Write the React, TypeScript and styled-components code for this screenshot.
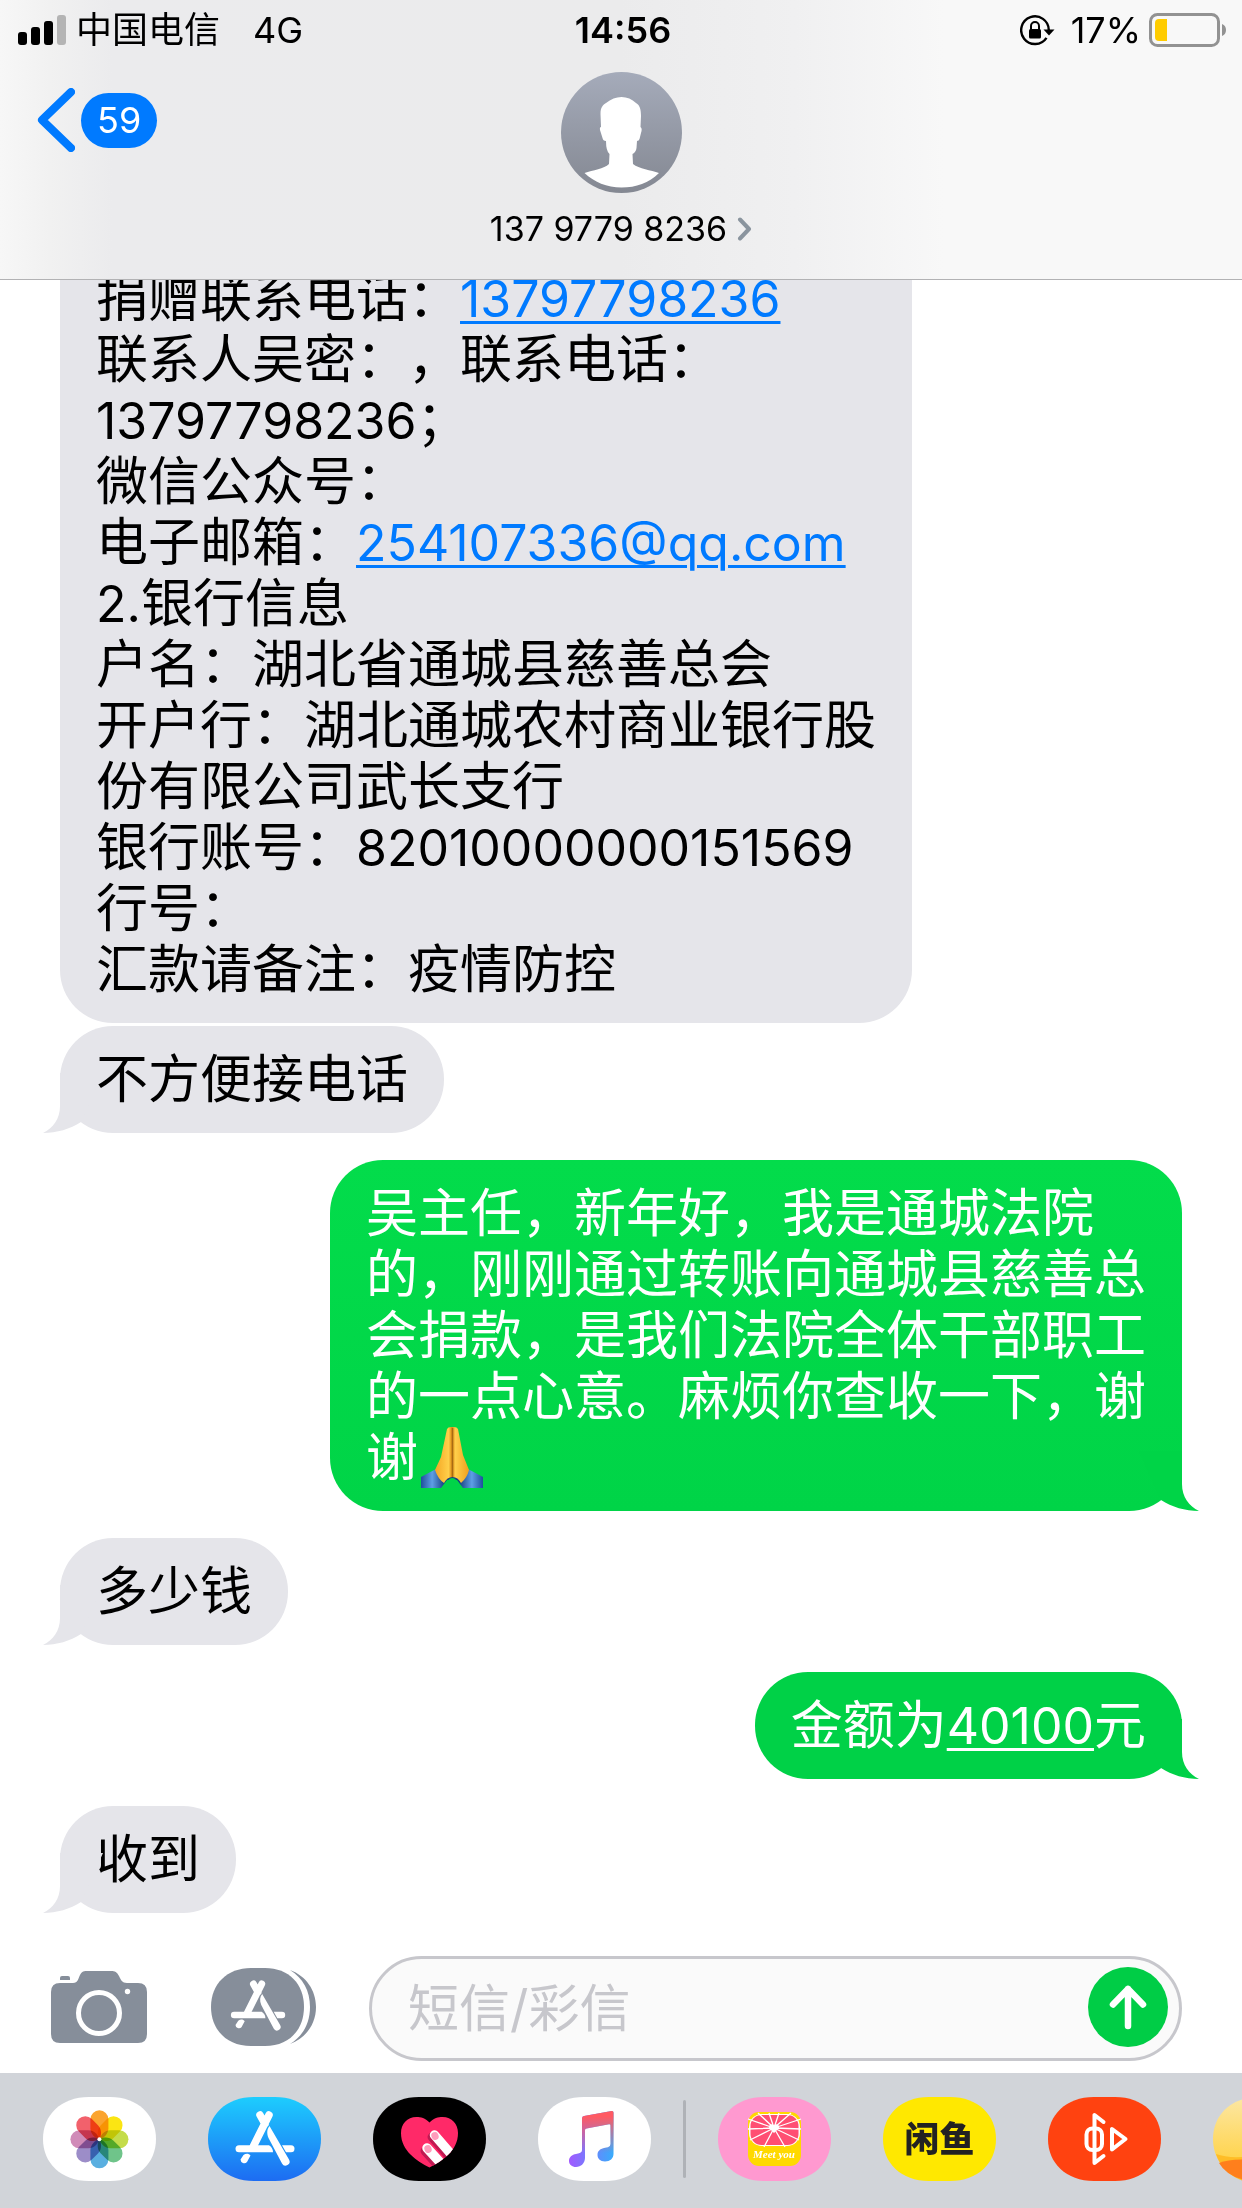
import React from "react";
import styled, { createGlobalStyle } from "styled-components";

const GlobalStyle = createGlobalStyle`
  * { box-sizing: border-box; }
  body {
    margin: 0;
    background: #fff;
    color: #000;
    font-family: Inter, "Noto Sans CJK SC", sans-serif;
  }
  button, input { font: inherit; color: inherit; }
`;

const Screen = styled.div`
  display: flex;
  flex-direction: column;
  height: 100vh;
  overflow: hidden;
`;

/* ---------- header ---------- */

const Header = styled.header`
  flex: none;
  border-bottom: 1px solid #b2b2b4;
  background: linear-gradient(
    90deg,
    #f7f7f7 0%,
    #f1f1f1 4%,
    #ebebed 9%,
    #ebebec 50%,
    #f0f0f1 64%,
    #f8f8f8 76%
  );
`;

const StatusBar = styled.div`
  display: grid;
  grid-template-columns: 1fr auto 1fr;
  align-items: center;
  height: 60px;
  padding: 0 14px 0 18px;
  font-size: 36px;
  line-height: 60px;
`;

const StatusGroup = styled.div<{ $end?: boolean }>`
  display: flex;
  align-items: center;
  gap: ${(p) => (p.$end ? "8px" : "9px")};
  justify-content: ${(p) => (p.$end ? "flex-end" : "flex-start")};
`;

const Network = styled.span`
  margin-left: 24px;
`;

const Clock = styled.time`
  font-weight: 600;
`;

const RotationLock = styled.svg`
  width: 35px;
  height: 31px;
  margin-right: 8px;
`;

const NavBar = styled.div`
  display: grid;
  grid-template-columns: 1fr auto 1fr;
  align-items: start;
  padding: 12px 36px 30px;
`;

const BackButton = styled.button`
  display: flex;
  align-items: center;
  justify-self: start;
  gap: 6px;
  margin-top: 16px;
  padding: 0;
  border: 0;
  background: none;
`;

const Badge = styled.span`
  padding: 0 16px;
  border-radius: 28px;
  background: #007aff;
  color: #fff;
  font-size: 36px;
  line-height: 55px;
`;

const Contact = styled.button`
  display: flex;
  flex-direction: column;
  align-items: center;
  gap: 16px;
  padding: 0;
  border: 0;
  background: none;
`;

const ContactName = styled.span`
  display: flex;
  align-items: center;
  gap: 10px;
  font-size: 34px;
  line-height: 40px;
`;

/* ---------- conversation ---------- */

const Conversation = styled.main`
  display: flex;
  flex: 1;
  flex-direction: column;
  justify-content: flex-end;
  min-height: 0;
  overflow: hidden;
  gap: 27px;
  padding: 0 60px 16px;
`;

const Group = styled.div`
  display: flex;
  flex-direction: column;
  gap: 3px;
`;

const Bubble = styled.div<{ $sent?: boolean; $continued?: boolean; $tone?: string }>`
  position: relative;
  align-self: ${(p) => (p.$sent ? "flex-end" : "flex-start")};
  max-width: 852px;
  padding: 23px 36px;
  border-radius: ${(p) => (p.$continued ? "0 0 53px 53px" : "53px")};
  background: ${(p) => p.$tone ?? "#e5e5ea"};
  color: ${(p) => (p.$sent ? "#fff" : "#000")};
  font-size: 52px;
  line-height: 61px;
  text-spacing-trim: space-all;
`;

const TailShape = styled.svg<{ $sent?: boolean }>`
  position: absolute;
  bottom: 0;
  ${(p) => (p.$sent ? "right: -17px; transform: scaleX(-1);" : "left: -17px;")}
  width: 60px;
  height: 60px;
`;

const DataLink = styled.a<{ $inherit?: boolean }>`
  color: ${(p) => (p.$inherit ? "inherit" : "#007aff")};
  text-decoration: underline;
  text-decoration-thickness: 3px;
  text-underline-offset: 4px;
`;

const Latin = styled.span`
  font-size: 50px;
  line-height: 40px;
`;

const Emoji = styled.svg`
  width: 62px;
  height: 61px;
  margin-left: 3px;
  vertical-align: bottom;
`;

function Tail({ sent, color = "#e5e5ea" }: { sent?: boolean; color?: string }) {
  return (
    <TailShape $sent={sent} viewBox="0 0 60 60" aria-hidden="true">
      <path d="M17 0V33C17 46 10 55 0 60C14 60 27 56 38 49L60 0Z" fill={color} />
    </TailShape>
  );
}

/* ---------- composer ---------- */

const Composer = styled.form`
  display: flex;
  flex: none;
  align-items: center;
  gap: 53px;
  padding: 27px 60px 12px 51px;
`;

const Tools = styled.div`
  display: flex;
  align-items: center;
  gap: 64px;
  padding-bottom: 3px;
`;

const PlainButton = styled.button`
  display: block;
  flex: none;
  padding: 0;
  border: 0;
  background: none;
  line-height: 0;
`;

const Field = styled.div`
  display: flex;
  flex: 1;
  align-items: flex-start;
  min-width: 0;
  height: 105px;
  padding: 8px 11px 0 36px;
  border: 3px solid #c7c7cc;
  border-radius: 53px;
  background: #fafafa;
`;

const TextInput = styled.input`
  flex: 1;
  min-width: 0;
  height: 83px;
  padding: 0;
  border: 0;
  outline: 0;
  background: none;
  font-size: 51px;
  &::placeholder { color: #c7c7cc; opacity: 1; }
`;

/* ---------- app drawer ---------- */

const Dock = styled.nav`
  display: flex;
  flex: none;
  align-items: center;
  overflow: hidden;
  padding: 24px 0 27px 43px;
  background: #d1d4d9;
`;

const AppGroup = styled.div`
  display: flex;
  flex: none;
  gap: 52px;
`;

const Divider = styled.div`
  flex: none;
  width: 3px;
  height: 78px;
  margin: 0 32px;
  border-radius: 2px;
  background: #afb2b7;
`;

const AppSvg = styled.svg`
  width: 113px;
  height: 84px;
`;

function AppIcon({ label, fill, children }: { label: string; fill: string; children: React.ReactNode }) {
  return (
    <PlainButton type="button" aria-label={label}>
      <AppSvg viewBox="0 0 113 84">
        <path
          d="M0 42C0 18 18 0 46 0H67C95 0 113 18 113 42C113 66 95 84 67 84H46C18 84 0 66 0 42Z"
          fill={fill}
        />
        {children}
      </AppSvg>
    </PlainButton>
  );
}

const PETALS = ["#fba42f", "#fbe513", "#c4dc4a", "#6fc48a", "#5aafe0", "#9c8dc8", "#d08bb8", "#f2616c"];

function StoreMark() {
  return (
    <g fill="#fff">
      <path d="M61 18L45.500 49M52 18L57 27" stroke="#fff" strokeWidth="7.500" strokeLinecap="round" fill="none" />
      <path d="M61.500 29L81 62.500A4 4 0 0 1 74 66.500L60.500 41C58.500 36 59 32 61.500 29Z" />
      <path d="M31 48.300H61C63.500 50 65 52 65 55.300H31A3.500 3.500 0 0 1 31 48.300Z" />
      <path d="M74 48.300H83A3.500 3.500 0 0 1 83 55.300H78Z" />
      <path d="M35.500 58C38 56 41 56.500 42.500 58.500L39 65A3.800 3.800 0 0 1 32.500 62.500Z" />
    </g>
  );
}

export default function App() {
  return (
    <Screen>
      <GlobalStyle />
      <Header>
        <StatusBar>
          <StatusGroup>
            <svg width="49" height="32" viewBox="0 0 49 32" aria-label="信号">
              <rect x="0" y="18" width="9" height="13" rx="3" />
              <rect x="13" y="13" width="9" height="18" rx="3" />
              <rect x="26" y="7" width="9" height="24" rx="3" />
              <rect x="39" y="1" width="9" height="30" rx="3" fill="#b4b4b4" />
            </svg>
            <span>中国电信</span>
            <Network>4G</Network>
          </StatusGroup>
          <Clock>14:56</Clock>
          <StatusGroup $end>
            <RotationLock viewBox="0 0 35 31" aria-label="竖排方向锁定">
              <path d="M28.800 15A13.800 13.800 0 1 0 26.500 22.800" fill="none" stroke="#000" strokeWidth="2.400" />
              <path d="M23.500 14.500H34.500L29 20.500Z" />
              <rect x="9" y="14" width="12" height="9.500" rx="1.500" />
              <path d="M11 15V11A4 4 0 0 1 19 11V15" fill="none" stroke="#000" strokeWidth="2" />
            </RotationLock>
            <span>17%</span>
            <svg width="79" height="34" viewBox="0 0 79 34" aria-label="电池">
              <rect x="1.500" y="1.500" width="68" height="31" rx="7" fill="none" stroke="#929292" strokeWidth="3" />
              <path d="M10 6H18V28H10Q6 28 6 24V10Q6 6 10 6Z" fill="#ffcc00" />
              <path d="M73 11Q77 12.500 77 17T73 23Z" fill="#929292" />
            </svg>
          </StatusGroup>
        </StatusBar>
        <NavBar>
          <BackButton type="button" aria-label="返回，59 条未读">
            <svg width="39" height="64" viewBox="0 0 39 64">
              <path d="M35 4L6 32L35 60" fill="none" stroke="#007aff" strokeWidth="8" strokeLinecap="round" strokeLinejoin="round" />
            </svg>
            <Badge>59</Badge>
          </BackButton>
          <Contact type="button">
            <svg width="121" height="121" viewBox="0 0 121 121" aria-hidden="true">
              <defs>
                <linearGradient id="avatar" x1="0" y1="0" x2="0" y2="1">
                  <stop offset="0" stopColor="#a5abba" />
                  <stop offset="1" stopColor="#848892" />
                </linearGradient>
              </defs>
              <circle cx="60.500" cy="60.500" r="60.500" fill="url(#avatar)" />
              <path
                d="M60.500 25C66 25 71 27 75 31C79 33 80 38 80 44L79.500 55C81 56 81 58 80 61L78.500 67Q78 69 76 69L75.500 76Q75 80 71.500 82L72 92C78 97 90 98 98 101C88 111 75 115.500 60.500 115.500C46 115.500 33 110 23.500 101C32 98 43 97 48 92L48.500 82Q45 79 45 69Q42 69 41.500 66L39 58Q38.500 55 40 55L39.500 42C39.500 35 42 33 45 31C50 27 55 25 60.500 25Z"
                fill="#fff"
              />
            </svg>
            <ContactName>
              137 9779 8236
              <svg width="15" height="24" viewBox="0 0 15 24" aria-hidden="true">
                <path d="M3 2.500L12 12L3 21.500" fill="none" stroke="#8a949e" strokeWidth="4" strokeLinecap="round" strokeLinejoin="round" />
              </svg>
            </ContactName>
          </Contact>
        </NavBar>
      </Header>

      <Conversation>
        <Group>
          <Bubble $continued>
            捐赠联系电话：<DataLink href="tel:13797798236"><Latin>13797798236</Latin></DataLink>
            <br />
            联系人吴密：，联系电话：
            <br />
            <Latin>13797798236</Latin>；
            <br />
            微信公众号：
            <br />
            电子邮箱：<DataLink href="mailto:254107336@qq.com"><Latin>254107336@qq.com</Latin></DataLink>
            <br />
            <Latin>2.</Latin>银行信息
            <br />
            户名：湖北省通城县慈善总会
            <br />
            开户行：湖北通城农村商业银行股份有限公司武长支行
            <br />
            银行账号：<Latin>82010000000151569</Latin>
            <br />
            行号：
            <br />
            汇款请备注：疫情防控
          </Bubble>
          <Bubble>
            不方便接电话
            <Tail />
          </Bubble>
        </Group>
        <Bubble $sent $tone="linear-gradient(#03dc4b, #00d447)">
          吴主任，新年好，我是通城法院的，刚刚通过转账向通城县慈善总会捐款，是我们法院全体干部职工的一点心意。麻烦你查收一下，谢谢
          <Emoji viewBox="0 0 62 61" role="img" aria-label="双手合十">
            <defs>
              <linearGradient id="hand" x1="0" y1="0" x2="1" y2="0">
                <stop offset="0" stopColor="#f5a623" />
                <stop offset="0.400" stopColor="#ffcf4a" />
                <stop offset="0.500" stopColor="#d98a14" />
                <stop offset="0.600" stopColor="#ffcf4a" />
                <stop offset="1" stopColor="#f0a01e" />
              </linearGradient>
              <linearGradient id="sleeve" x1="0" y1="0" x2="1" y2="0">
                <stop offset="0" stopColor="#1f4f9c" />
                <stop offset="0.180" stopColor="#5e9ee4" />
                <stop offset="0.380" stopColor="#173f80" />
                <stop offset="0.620" stopColor="#173f80" />
                <stop offset="0.820" stopColor="#5e9ee4" />
                <stop offset="1" stopColor="#1f4f9c" />
              </linearGradient>
            </defs>
            <path d="M15 42L0 50V61H20L26 53L36 53L42 61H62V50L47 42Z" fill="url(#sleeve)" />
            <path d="M26 2Q27 0 30 0H33Q36 0 37 2L42 28L48 43Q46 51 40 56Q37 50 31.500 50Q26 50 23 56Q17 52 14 43L20 30Z" fill="url(#hand)" />
            <path d="M26 55Q31 47 37 55L41 61H22Z" fill="#00d448" />
            <path d="M31.500 1V50" stroke="#a86a12" strokeWidth="1.500" />
          </Emoji>
          <Tail sent color="#00d447" />
        </Bubble>
        <Bubble>
          多少钱
          <Tail />
        </Bubble>
        <Bubble $sent $tone="#00d147">
          金额为<DataLink $inherit href="#amount"><Latin>40100</Latin></DataLink>元
          <Tail sent color="#00d147" />
        </Bubble>
        <Bubble>
          收到
          <Tail />
        </Bubble>
      </Conversation>

      <Composer onSubmit={(e) => e.preventDefault()}>
        <Tools>
          <PlainButton type="button" aria-label="相机">
            <svg width="96" height="72" viewBox="0 0 96 72">
              <path
                d="M9 12H22C27 12 27 8 29 4C31 0 33 0 37 0H60C64 0 66 1 68 5C70 9 71 12 76 12H87Q96 12 96 21V63Q96 72 87 72H9Q0 72 0 63V21Q0 12 9 12Z"
                fill="#868e9a"
              />
              <path d="M9 9V7Q9 5 11 5H17Q19 5 19 7V9Z" fill="#868e9a" />
              <circle cx="48" cy="42" r="20.500" fill="none" stroke="#fff" strokeWidth="5" />
              <circle cx="76.500" cy="20.500" r="2.700" fill="#fff" />
            </svg>
          </PlainButton>
          <PlainButton type="button" aria-label="应用">
            <svg width="105" height="78" viewBox="0 0 105 78">
              <path d="M0 39C0 16 16 0 40 0H54C78 0 93 16 93 39C93 62 78 78 54 78H40C16 78 0 62 0 39Z" fill="#868e9a" />
              <path d="M79 2C95 8 105 22 105 39S95 70 79 76C92 68 99 55 99 39S92 10 79 2Z" fill="#868e9a" />
              <g transform="translate(-5.400 -0.600) scale(0.920)">
                <StoreMark />
              </g>
            </svg>
          </PlainButton>
        </Tools>
        <Field>
          <TextInput type="text" aria-label="短信/彩信" placeholder="短信/彩信" />
          <PlainButton type="submit" aria-label="发送">
            <svg width="80" height="80" viewBox="0 0 80 80">
              <circle cx="40" cy="40" r="40" fill="#00cd46" />
              <path d="M40 59V22M25 37.500L40 22L55 37.500" fill="none" stroke="#fff" strokeWidth="6.500" strokeLinecap="round" strokeLinejoin="round" />
            </svg>
          </PlainButton>
        </Field>
      </Composer>

      <Dock aria-label="应用抽屉">
        <AppGroup>
          <AppIcon label="照片" fill="#fff">
            <g transform="translate(56.400 42.300)" style={{ isolation: "isolate" }}>
              {PETALS.map((color, i) => (
                <path
                  key={color}
                  d="M0 0C-4 -1 -9 -5 -9 -11V-20A9 9 0 0 1 9 -20V-11C9 -5 4 -1 0 0Z"
                  fill={color}
                  transform={`rotate(${i * 45})`}
                  style={{ mixBlendMode: "multiply" }}
                />
              ))}
              <circle r="2" fill="#fff" />
            </g>
          </AppIcon>
          <AppIcon label="App Store" fill="url(#store)">
            <defs>
              <linearGradient id="store" x1="0" y1="0" x2="0" y2="1">
                <stop offset="0" stopColor="#1dcdfe" />
                <stop offset="1" stopColor="#1d6cf2" />
              </linearGradient>
            </defs>
            <StoreMark />
          </AppIcon>
          <AppIcon label="Digital Touch" fill="#000">
            <defs>
              <clipPath id="heart">
                <path d="M56.500 25.500C52 21 48 20 43.500 20C34 20 28 27 28 36C28 54 44 64 56.500 70.500C69 64 85 54 85 36C85 27 79 20 69.500 20C65 20 61 21 56.500 25.500Z" />
              </clipPath>
            </defs>
            <g clipPath="url(#heart)">
              <rect width="113" height="84" fill="#ff2968" />
              <path d="M59 40L82 66M52 54L70 74" stroke="#c01a52" strokeWidth="9" strokeLinecap="round" />
              <path d="M61.500 38L84 64M54 51L74 73" stroke="#fff" strokeWidth="9.500" strokeLinecap="round" />
              <rect x="58.500" y="35" width="7" height="8" rx="3.400" fill="#ff9cbc" transform="rotate(-20 62 39)" />
              <rect x="51.500" y="48" width="7" height="8" rx="3.400" fill="#ff9cbc" transform="rotate(-20 55 52)" />
            </g>
          </AppIcon>
          <AppIcon label="音乐" fill="#fff">
            <defs>
              <linearGradient id="noteBase" x1="0" y1="0" x2="1" y2="0">
                <stop offset="0" stopColor="#a259ff" />
                <stop offset="1" stopColor="#38acfb" />
              </linearGradient>
              <linearGradient id="noteTop" x1="0" y1="0" x2="0" y2="1">
                <stop offset="0.100" stopColor="#ff5a63" />
                <stop offset="0.750" stopColor="#ff5a63" stopOpacity="0" />
              </linearGradient>
            </defs>
            {["url(#noteBase)", "url(#noteTop)"].map((fill) => (
              <path
                key={fill}
                d="M46 19L73.500 14Q75.500 13.700 75.500 15.500V57C75.500 61.500 72 64.500 67 64.500C62 64.500 59.500 61.500 59.500 58C59.500 54 62 52 66 51L70 50.300Q72.500 49.500 72.500 47V28.500Q72.500 27 71 27.300L48.500 31.500Q47 31.800 47 33V61C47 66 43 70 38 70C34 70 31 67.500 31 64C31 60 34 57.500 38 57L41 56.300Q44 55.500 44 53V21.500Q44 19.400 46 19Z"
                fill={fill}
              />
            ))}
          </AppIcon>
        </AppGroup>
        <Divider />
        <AppGroup>
          <AppIcon label="美柚" fill="#ff99d0">
            <rect x="30" y="15" width="53" height="54" rx="11" fill="#ffd900" />
            <rect x="31" y="17" width="51" height="32" rx="13" fill="#fff" />
            <rect x="32.500" y="18" width="48" height="30" rx="11" fill="#ff4f73" />
            <path
              d="M56 31L30 22M56 31L30 32M56 31L32 43M56 31L46 50M56 31L67 50M56 31L81 43M56 31L83 32M56 31L83 22M56 31L40 16M56 31L51 16M56 31L61 16M56 31L73 16"
              stroke="#fff"
              strokeWidth="1.300"
            />
            <path d="M56 36L51.500 31.500A2.700 2.700 0 0 1 56 28.500A2.700 2.700 0 0 1 60.500 31.500Z" fill="#fff" />
            <text x="56" y="61" textAnchor="middle" fill="#fff" fontFamily="Liberation Serif, serif" fontStyle="italic" fontWeight="700" fontSize="11">
              Meet you
            </text>
          </AppIcon>
          <AppIcon label="闲鱼" fill="#ffe800">
            <text x="56.500" y="55" textAnchor="middle" fill="#222" fontFamily="Noto Sans CJK SC, sans-serif" fontWeight="900" fontSize="35">
              闲鱼
            </text>
          </AppIcon>
          <AppIcon label="视频" fill="#ff4210">
            <g fill="none" stroke="#fff" strokeWidth="4" strokeLinecap="round" strokeLinejoin="round">
              <path d="M55.500 25L46.500 18V66L55.500 59" />
              <rect x="38.500" y="31.500" width="15.500" height="21.500" rx="6" />
              <path d="M64 32V52.500L77.500 42Z" />
            </g>
          </AppIcon>
          <AppIcon label="更多" fill="url(#orb)">
            <defs>
              <linearGradient id="orb" x1="0" y1="0" x2="0" y2="1">
                <stop offset="0" stopColor="#fce7a4" />
                <stop offset="0.700" stopColor="#ffd552" />
              </linearGradient>
            </defs>
            <path d="M3 57Q16 62 40 59V84H30Q9 76 3 57Z" fill="#ffbd26" />
            <path d="M6 66Q18 61 40 63V84H36Q14 80 6 66Z" fill="#ff7f1c" />
          </AppIcon>
        </AppGroup>
      </Dock>
    </Screen>
  );
}
